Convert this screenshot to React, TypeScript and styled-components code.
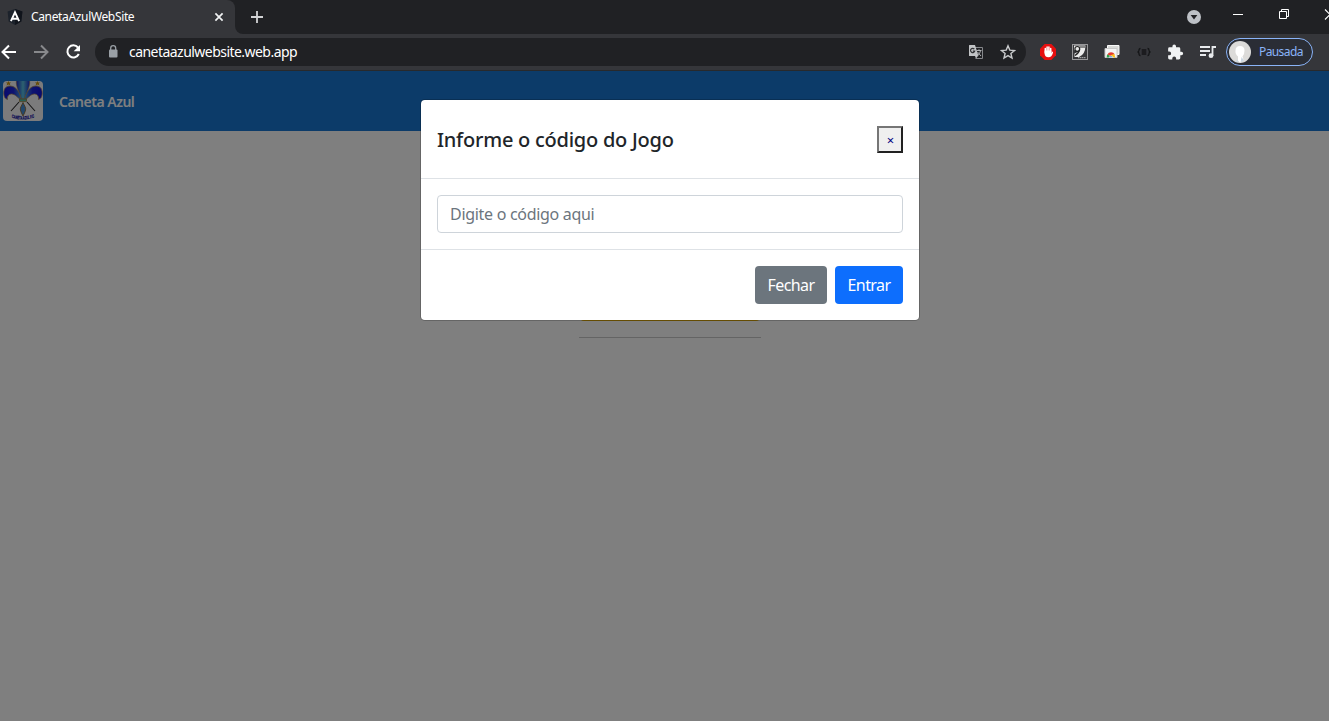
import React from 'react';
import styled, { createGlobalStyle } from 'styled-components';

const GlobalStyle = createGlobalStyle`
  * { box-sizing: border-box; }
  body { margin: 0; overflow: hidden; font-family: "Open Sans", "Noto Sans", sans-serif; }
  button, input { font-family: inherit; }
`;

const Browser = styled.div`
  display: flex;
  flex-direction: column;
  width: 100%;
  height: 100vh;
  overflow: hidden;
`;

const TabStrip = styled.div`
  display: flex;
  align-items: stretch;
  height: 34px;
  background: #202124;
`;

const Tab = styled.div`
  display: flex;
  align-items: center;
  width: 235px;
  padding: 0 9px 0 7px;
  background: #35363a;
  border-top-right-radius: 8px;
`;

const TabTitle = styled.span`
  flex: 1;
  margin: -1px 0 0 8px;
  color: #fff;
  font-family: "Noto Sans", sans-serif;
  font-size: 12px;
  letter-spacing: -0.35px;
  white-space: nowrap;
`;

const NewTab = styled.div`
  display: flex;
  align-items: center;
  flex: 1;
  padding-left: 15px;
  background: #202124;
  border-bottom-left-radius: 8px;
`;

const StripEnd = styled.div`
  display: flex;
  flex: 1;
  background: #35363a;
`;

const WindowControls = styled.div`
  display: flex;
  align-items: center;
  width: 144px;
  background: #202124;
`;

const Toolbar = styled.div`
  display: flex;
  align-items: center;
  height: 37px;
  background: #35363a;
  border-bottom: 1px solid #28292c;
`;

const NavIcons = styled.div`
  display: flex;
  gap: 12px;
  width: 95px;
`;

const Omnibox = styled.div`
  display: flex;
  align-items: center;
  width: 931px;
  height: 28px;
  padding: 0 10px 0 11px;
  border-radius: 14px;
  background: #202124;
`;

const Url = styled.span`
  flex: 1;
  margin: -1px 0 0 9px;
  color: #fff;
  font-family: "Noto Sans", sans-serif;
  font-size: 14px;
  letter-spacing: -0.54px;
`;

const Extensions = styled.div`
  display: flex;
  align-items: center;
  gap: 12px;
  padding-left: 12px;
`;

const BarIcon = styled.svg<{ $gap?: number }>`
  display: block;
  flex: none;
  margin-right: ${(p) => p.$gap ?? 0}px;
`;

const Profile = styled.div`
  display: flex;
  align-items: center;
  width: 87px;
  height: 28px;
  margin-left: 8px;
  padding-left: 2px;
  border: 1px solid #8ab4f8;
  border-radius: 14px;
  background: #2a2d35;
  color: #8ab4f8;
  font-family: "Noto Sans", sans-serif;
  font-size: 12px;
  letter-spacing: -0.6px;
`;

const ProfileName = styled.span`
  margin: -1px 0 0 8px;
`;

const Page = styled.main`
  position: relative;
  flex: 1;
  background: #fff;
`;

const NavBar = styled.header`
  display: flex;
  align-items: center;
  height: 60px;
  padding-left: 3px;
  background: #1976d2;
  color: #fff;
`;

const Brand = styled.span`
  margin: 1px 0 0 16px;
  font-family: "Noto Sans", sans-serif;
  font-size: 14px;
  font-weight: 600;
  letter-spacing: -0.5px;
`;

const Menu = styled.section`
  display: flex;
  flex-direction: column;
  align-items: center;
  width: 182px;
  margin: 152px 0 0 579px;
  padding-bottom: 16px;
  border-bottom: 1px solid #c8c8c8;
`;

const MenuButton = styled.div`
  width: 180px;
  height: 38px;
  border-radius: 4px;
  background: #ffc107;
`;

const Backdrop = styled.div`
  position: absolute;
  inset: 0;
  display: flex;
  align-items: flex-start;
  justify-content: center;
  padding: 28px 0 0 11px;
  background: rgba(0, 0, 0, 0.5);
`;

const Dialog = styled.div`
  width: 500px;
  border: 1px solid rgba(0, 0, 0, 0.2);
  border-radius: 4.8px;
  background: #fff;
  background-clip: padding-box;
`;

const DialogHeader = styled.div`
  display: flex;
  align-items: center;
  justify-content: space-between;
  height: 79px;
  padding: 0 16px;
  border-bottom: 1px solid #dee2e6;
`;

const DialogTitle = styled.h4`
  margin: 2px 0 0;
  color: #212529;
  font-family: "Noto Sans", sans-serif;
  font-size: 20px;
  font-weight: 500;
  line-height: 30px;
  letter-spacing: -0.25px;
`;

const CloseButton = styled.button`
  width: 26px;
  height: 27px;
  padding: 1px 0 0 1px;
  border: 2px solid;
  border-color: #767676 #212121 #212121 #767676;
  background: #efefef;
  color: #000080;
  font-family: "Noto Sans", sans-serif;
  font-size: 13px;
  line-height: 20px;
`;

const DialogBody = styled.div`
  padding: 16px;
`;

const CodeInput = styled.input`
  display: block;
  width: 100%;
  height: 38px;
  padding: 6px 12px;
  border: 1px solid #ced4da;
  border-radius: 4px;
  outline: none;
  font-family: "Noto Sans", sans-serif;
  font-size: 16px;
  letter-spacing: -0.3px;
  &::placeholder { color: #6c757d; opacity: 1; }
`;

const DialogFooter = styled.div`
  display: flex;
  justify-content: flex-end;
  gap: 8px;
  padding: 16px;
  border-top: 1px solid #dee2e6;
`;

const ActionButton = styled.button<{ $color: string; $width: number }>`
  width: ${(p) => p.$width}px;
  height: 38px;
  padding: 0;
  border: 0;
  border-radius: 4px;
  background: ${(p) => p.$color};
  color: #fff;
  font-family: "Noto Sans", sans-serif;
  font-size: 16px;
  letter-spacing: -0.6px;
`;

const ClubLogo = () => (
  <BarIcon width="40" height="40" viewBox="0 0 40 40">
    <defs>
      <clipPath id="badge"><rect width="40" height="40" rx="4" /></clipPath>
      <linearGradient id="petal" x1="0" x2="1">
        <stop offset="0" stopColor="#1a2ac8" /><stop offset=".5" stopColor="#5ac4e0" /><stop offset="1" stopColor="#1a2ac8" />
      </linearGradient>
      <linearGradient id="leftPetal" x1="0" x2="1">
        <stop offset="0" stopColor="#1414dc" /><stop offset=".55" stopColor="#1c28e0" /><stop offset="1" stopColor="#4aa8e0" />
      </linearGradient>
      <linearGradient id="rightPetal" x1="1" x2="0">
        <stop offset="0" stopColor="#1414dc" /><stop offset=".55" stopColor="#1c28e0" /><stop offset="1" stopColor="#4aa8e0" />
      </linearGradient>
      <path id="arc" d="M16 36.500Q36 41 62 35.500" />
    </defs>
    <g clipPath="url(#badge)">
      <rect width="40" height="40" fill="#f6f6f8" />
      <path d="m5.500 0 .8 1.400h1.800L6.800 2.600l.6 1.800-1.900-1-1.900 1 .6-1.800L2.900 1.400h1.800zM34.500 0l.8 1.400h1.800l-1.300 1.200.6 1.800-1.900-1-1.900 1 .6-1.800-1.300-1.200h1.800z" fill="#d09a12" />
      <path d="m8 30 8-9M32 30l-8-9" stroke="#2c2c2c" strokeWidth="1.100" />
      <path d="M13.500-1h13c1 5-1.500 10-5 19h-3C15 9 12.500 4 13.500-1z" fill="url(#petal)" stroke="#b08c58" strokeWidth=".6" />
      <path d="M18.500 19C17 11 13 5 7 5 2 5 .5 9 .8 13c.2 3 1.700 5 3.700 5.500-.5-3 1-5.500 4-5.500 4 0 6 4 10 6z" fill="url(#leftPetal)" stroke="#a88a60" strokeWidth=".8" />
      <path d="M21.500 19C23 11 27 5 33 5c5 0 6.500 4 6.200 8-.2 3-1.700 5-3.700 5.500.5-3-1-5.500-4-5.500-4 0-6 4-10 6z" fill="url(#rightPetal)" stroke="#a88a60" strokeWidth=".8" />
      <path d="M20 21.500c-1.200 3-3.200 5-2.600 7.500.4 2 1.600 4 2.600 6 1-2 2.200-4 2.600-6 .6-2.500-1.400-4.500-2.600-7.500z" fill="#4690d8" stroke="#8c6428" strokeWidth=".8" />
      <path d="M16.500 18h7v2.600h-7z" fill="#53bfa8" stroke="#9c7434" strokeWidth=".7" />
      <g transform="scale(.55 1)">
        <text fontFamily="Liberation Sans" fontWeight="700" fontSize="4.700" fill="#1414a8" stroke="#1414a8" strokeWidth=".3"><textPath href="#arc">CANETA AZUL F.C</textPath></text>
      </g>
    </g>
  </BarIcon>
);

const App = () => (
  <Browser>
    <GlobalStyle />
    <TabStrip>
      <Tab>
        <BarIcon width="16" height="16" viewBox="0 0 16 16">
          <path d="M8 0 15.400 2.600 14.300 12.400 8 16 1.700 12.400 .6 2.600z" fill="#1c222b" />
          <path d="M8 0 15.400 2.600 14.300 12.400 8 16z" fill="#10141b" />
          <path d="M3.900 12.200 8 3.300 12.100 12.200M5.500 9.700h5" fill="none" stroke="#fff" strokeWidth="1.900" />
        </BarIcon>
        <TabTitle>CanetaAzulWebSite</TabTitle>
        <BarIcon width="14" height="14" viewBox="0 0 14 14"><path d="m3.400 3.400 7.200 7.200m0-7.200-7.200 7.200" stroke="#f1f3f4" strokeWidth="1.700" /></BarIcon>
      </Tab>
      <StripEnd>
        <NewTab>
          <BarIcon width="14" height="14" viewBox="0 0 14 14"><path d="M7 1v12M1 7h12" stroke="#d2d3d5" strokeWidth="1.800" /></BarIcon>
        </NewTab>
      </StripEnd>
      <WindowControls>
        <BarIcon width="16" height="16" viewBox="0 0 16 16" $gap={30}>
          <circle cx="9" cy="8" r="7" fill="#bdc1c6" /><path d="M5.600 6h6.800L9 10.500z" fill="#202124" />
        </BarIcon>
        <BarIcon width="12" height="18" viewBox="0 0 12 18" $gap={34}><path d="M2 6.500h10" stroke="#fff" /></BarIcon>
        <BarIcon width="12" height="18" viewBox="0 0 12 18" $gap={34}><path d="M2.500 3.500h7v7h-7zM4.500 3.500v-2h7v7h-2" fill="none" stroke="#fff" /></BarIcon>
        <BarIcon width="12" height="18" viewBox="0 0 12 18"><path d="m2 1.500 10 10m0-10-10 10" stroke="#fff" strokeWidth="1.100" /></BarIcon>
      </WindowControls>
    </TabStrip>
    <Toolbar>
      <NavIcons>
        <BarIcon width="20" height="20" viewBox="0 0 20 20"><path d="M16 10H3m6-6.500L2.500 10 9 16.500" fill="none" stroke="#fff" strokeWidth="2" /></BarIcon>
        <BarIcon width="20" height="20" viewBox="0 0 20 20"><path d="M2 10h13M9 3.500l6.500 6.500L9 16.500" fill="none" stroke="#88898c" strokeWidth="2" /></BarIcon>
        <BarIcon width="20" height="20" viewBox="0 0 20 20"><path d="M14 5.500A6 6 0 1 0 14.800 12" fill="none" stroke="#fff" strokeWidth="2" /><path d="M16 3v6.300H9.700z" fill="#fff" /></BarIcon>
      </NavIcons>
      <Omnibox>
        <BarIcon width="14" height="16" viewBox="0 0 14 16"><rect x="3" y="5.500" width="8.500" height="8" rx="1" fill="#9aa0a6" /><path d="M4.700 6V4.200a2.500 2.500 0 0 1 5 0V6" fill="none" stroke="#9aa0a6" strokeWidth="1.300" /></BarIcon>
        <Url>canetaazulwebsite.web.app</Url>
        <BarIcon width="16" height="16" viewBox="0 0 16 16" $gap={16}>
          <path d="M7 3.500h7.500v11H7.500" fill="none" stroke="#85878a" />
          <path d="M1.500 1H7l3.500 11h-9a.5.500 0 0 1-.5-.5v-10A.5.500 0 0 1 1.500 1zM7 12h3l-2 2.500z" fill="#c2c4c6" />
          <path d="M6.300 5.200A2.100 2.100 0 1 0 6.700 7H4.800" fill="none" stroke="#303134" strokeWidth="1.200" />
          <path d="M8.500 6.500h5M11 5.300v1.200M12.500 6.500c-.5 2.500-1.500 4-3 5M9.500 8l3.500 4" fill="none" stroke="#b0b2b4" />
        </BarIcon>
        <BarIcon width="16" height="16" viewBox="0 0 16 16"><path d="m8 1.800 1.800 4.300 4.700.4-3.600 3 1.100 4.600-4-2.500-4 2.500 1.100-4.600-3.600-3 4.700-.4z" fill="none" stroke="#c8cacc" strokeWidth="1.400" /></BarIcon>
      </Omnibox>
      <Extensions>
        <BarIcon width="20" height="20" viewBox="0 0 20 20">
          <path d="M6.700 2h6.600L18 6.700v6.600L13.300 18H6.700L2 13.300V6.700z" fill="#e60f0f" />
          <path d="M7.300 11V6.500M9.100 9V5M10.900 9V5M12.700 10V6.500" stroke="#fff" strokeWidth="1.500" strokeLinecap="round" /><path d="M6.600 8.500h6.800v2.600l1-1.600q1 .2.600 1.200-1.200 4.500-4.500 4.500-3.900 0-3.900-4z" fill="#fff" />
        </BarIcon>
        <BarIcon width="20" height="20" viewBox="0 0 20 20">
          <rect x="2.500" y="2.500" width="15" height="15" fill="#37373a" stroke="#98989a" />
          <path d="M4 3.500h11.500q-.2 9-6.500 11.500H4.500v-3.500L9 9.500 4 8z" fill="#ececec" />
          <circle cx="7.300" cy="6.900" r="2.400" fill="#e8e8e8" stroke="#222" strokeWidth="1.200" />
          <path d="M9.500 5h5.500M9.600 7.600Q9 11 5 13.500" fill="none" stroke="#222" strokeWidth="1.200" /><path d="M8 15.700h8" stroke="#b7b7b7" strokeDasharray="1.500 .5" />
        </BarIcon>
        <BarIcon width="20" height="20" viewBox="0 0 20 20">
          <path d="M5.500 3.500h11.500v9H5.500z" fill="#d9dad8" stroke="#fafafa" /><path d="M3 6.500h12v9H3z" fill="#f5f5f5" stroke="#c9c9c9" />
          <path d="M9 14.500 5.400 12.200A4.200 4.200 0 0 0 4.800 15.500H9z" fill="#2ba24c" /><path d="M5.400 12.500a4.200 4.200 0 0 1 7.300-.2L9 14z" fill="#e33b2e" /><path d="m12.400 12 .8 3.500H9.500L9 13z" fill="#fbc116" />
          <path d="M7 15.500a2.200 2.200 0 0 1 4.200 0z" fill="#327ce8" stroke="#fff" strokeWidth=".5" />
        </BarIcon>
        <BarIcon width="20" height="20" viewBox="0 0 20 20"><path d="M6.500 6.500Q5 6.500 5 8.200T3.500 10q1.500 0 1.500 1.800t1.500 1.700M13.500 6.500Q15 6.500 15 8.200T16.500 10q-1.500 0-1.500 1.800t-1.500 1.700M7.700 8h4.600M7.700 10h4.600M7.700 12h4.600" fill="none" stroke="#141517" strokeWidth="1.300" /></BarIcon>
        <BarIcon width="20" height="20" viewBox="-1 -2.500 28 28"><path d="M20.500 11H19V7a2 2 0 0 0-2-2h-4V3.500a2.500 2.500 0 0 0-5 0V5H4a2 2 0 0 0-2 2v3.800h1.500a2.700 2.700 0 0 1 0 5.400H2V20a2 2 0 0 0 2 2h3.800v-1.500a2.700 2.700 0 0 1 5.400 0V22H17a2 2 0 0 0 2-2v-4h1.500a2.500 2.500 0 0 0 0-5z" fill="#f1f3f4" /></BarIcon>
        <BarIcon width="20" height="20" viewBox="0 0 20 20"><path d="M2 5h10M2 9h10M2 13h6M14.500 14V5h3.500" fill="none" stroke="#e8eaed" strokeWidth="1.800" /><circle cx="13" cy="13.700" r="2.400" fill="#e8eaed" /></BarIcon>
      </Extensions>
      <Profile>
        <BarIcon width="22" height="22" viewBox="0 0 22 22"><circle cx="11" cy="11" r="11" fill="#dcdbd9" /><path d="M9 20v-4.500Q6 13 6.500 9.500 6.500 5 11 5t4.500 4.500q0 4-2 6l1 3-3 3z" fill="#fff" /><path d="m12.500 16 2.500 3.500-3.500 2zM8 18l2 3H7z" fill="#cbd7e1" /></BarIcon>
        <ProfileName>Pausada</ProfileName>
      </Profile>
    </Toolbar>
    <Page>
      <NavBar><ClubLogo /><Brand>Caneta Azul</Brand></NavBar>
      <Menu><MenuButton /></Menu>
      <Backdrop>
        <Dialog role="dialog">
          <DialogHeader><DialogTitle>Informe o código do Jogo</DialogTitle><CloseButton>×</CloseButton></DialogHeader>
          <DialogBody><CodeInput placeholder="Digite o código aqui" /></DialogBody>
          <DialogFooter>
            <ActionButton $color="#6c757d" $width={72}>Fechar</ActionButton>
            <ActionButton $color="#0d6efd" $width={68}>Entrar</ActionButton>
          </DialogFooter>
        </Dialog>
      </Backdrop>
    </Page>
  </Browser>
);

export default App;
